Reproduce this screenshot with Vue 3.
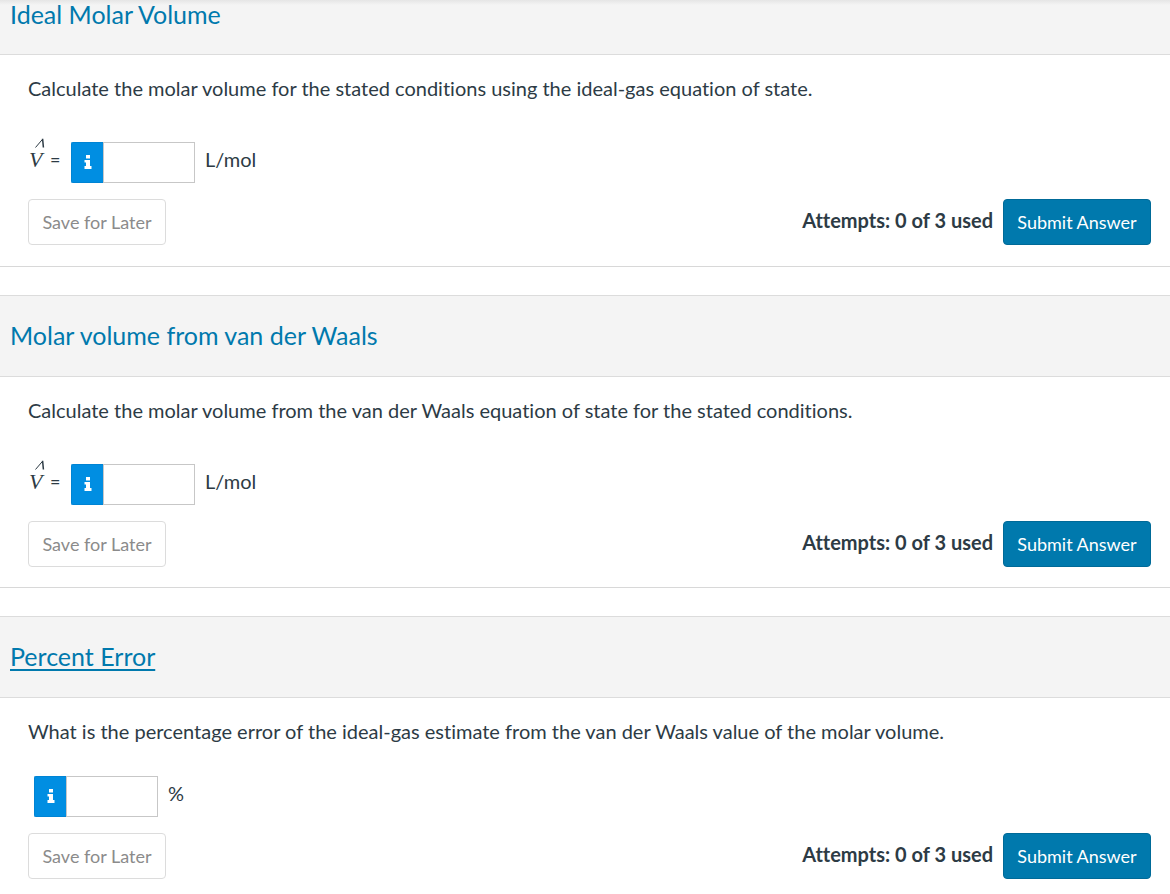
<script setup>
const questions = [
  { title: 'Ideal Molar Volume', prompt: 'Calculate the molar volume for the stated conditions using the ideal-gas equation of state.', unit: 'L/mol', symbol: true },
  { title: 'Molar volume from van der Waals', prompt: 'Calculate the molar volume from the van der Waals equation of state for the stated conditions.', unit: 'L/mol', symbol: true },
  { title: 'Percent Error', prompt: 'What is the percentage error of the ideal-gas estimate from the van der Waals value of the molar volume.', unit: '%', symbol: false, active: true },
]
</script>

<template>
  <main class="page">
    <section v-for="(q, i) in questions" :key="q.title" class="question">
      <header class="head">
        <h2><a href="#" :class="{ active: q.active }">{{ q.title }}</a></h2>
      </header>
      <div class="body">
        <p class="prompt" :class="{ tight: !q.symbol }">{{ q.prompt }}</p>
        <div class="answer" :class="{ plain: !q.symbol }">
          <label v-if="q.symbol" :for="'answer' + i" class="symbol">
            <span class="hat-v"><svg class="hat" width="10" height="10" viewBox="0 0 10 10" aria-hidden="true"><path d="M.5 9.5 L7.6 1.2" /><path class="thick" d="M7.6 .8 L8.4 9.5" /></svg><i>V</i></span>
            <span class="equals">=</span>
          </label>
          <div class="field">
            <button type="button" class="info" aria-label="Information">
              <svg width="8" height="14" viewBox="0 0 8 14" aria-hidden="true"><path d="M2 0h4v3.4H2zM.5 5H6v6h1.5v3H.5v-3H2V7.6H.5z" /></svg>
            </button>
            <input :id="'answer' + i" type="text" :aria-label="q.title">
          </div>
          <span class="unit">{{ q.unit }}</span>
        </div>
        <div class="actions">
          <button type="button" class="btn save">Save for Later</button>
          <div class="right">
            <strong>Attempts: 0 of 3 used</strong>
            <button type="button" class="btn submit">Submit Answer</button>
          </div>
        </div>
      </div>
    </section>
  </main>
</template>

<style>
body { margin: 0; background: #fff; }
</style>

<style scoped>
* { box-sizing: border-box; }
.page { font-family: Lato, sans-serif; font-size: 20px; line-height: 28px; color: #2d3b45; font-variant-ligatures: none; }
.question { border-bottom: 1px solid #d8d8d8; margin-bottom: 28px; }
.question:last-child { border-bottom: 0; margin-bottom: 0; }
.question:last-child .body { padding-bottom: 14px; }
.head { height: 82px; padding: 0 10px 2px; display: flex; align-items: center; background: #f4f4f4; border-top: 1px solid #dcdcdc; border-bottom: 1px solid #dcdcdc; }
.question:first-child .head { height: 55px; padding-bottom: 26px; border-top: 0; background: linear-gradient(#e5e5e5, #f4f4f4 5px); }
h2 { margin: 0; font-size: 25px; line-height: 32px; font-weight: 400; }
h2 a { color: #0079ad; text-decoration: none; }
h2 a.active { text-decoration: underline; text-decoration-thickness: 2px; text-underline-offset: 3px; }
.body { padding: 19px 19px 20px 28px; }
.question:first-child .body { padding-bottom: 21px; }
.prompt { margin: 0 0 40px; }
.prompt.tight { margin-bottom: 31px; }
.answer { display: flex; align-items: flex-start; margin-bottom: 16px; }
.plain { padding-left: 6px; }
.symbol { width: 43px; display: flex; align-items: flex-end; gap: 5px; height: 31px; }
.hat-v { display: flex; flex-direction: column; width: 17px; padding: 0 0 1px 1px; font-family: "Liberation Serif", serif; font-size: 22px; line-height: 24px; }
.hat { margin-left: 6px; fill: none; stroke: #2d3b45; stroke-width: 1; }
.thick { stroke-width: 1.5; }
.equals { font-size: 18px; line-height: 28px; }
.field { display: flex; width: 124px; height: 41px; }
.info { width: 32px; padding: 0 0 2px; border: 1px solid #0084d4; border-right: 0; border-radius: 2px 0 0 2px; background: #008ee2; display: grid; place-items: center; }
.info svg { fill: #fff; }
input { flex: 1; min-width: 0; padding: 0 8px; border: 1px solid #c7c7c7; font: inherit; color: inherit; border-radius: 0; }
.unit { margin: 3px 0 0 10px; }
.actions { display: flex; justify-content: space-between; align-items: flex-start; }
.right { display: flex; gap: 10px; }
.right strong { padding-top: 7px; }
.btn { height: 46px; padding: 0; border: 1px solid #dcdcdc; border-radius: 4px; font: inherit; font-size: 18px; white-space: nowrap; background: #fff; color: #8b8b8b; font-variant-ligatures: none; }
.save { width: 138px; }
.submit { width: 148px; background: #0079ad; border-color: #006a98; color: #fff; }
</style>
